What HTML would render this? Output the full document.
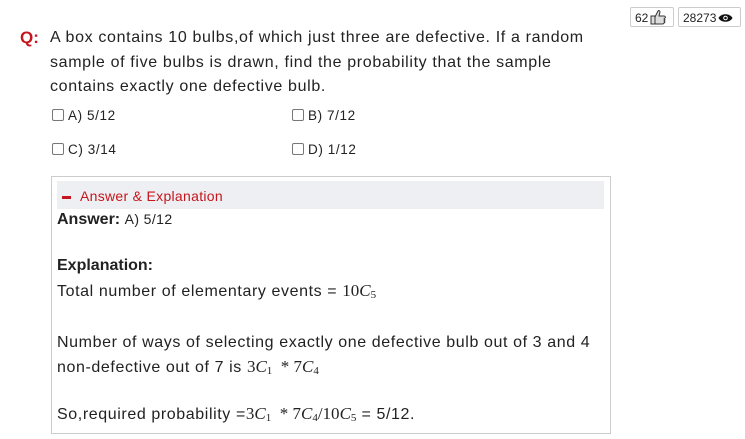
<!DOCTYPE html>
<html><head><meta charset="utf-8"><style>
body{margin:0;width:745px;height:439px;background:#fff;font-family:"Liberation Sans",sans-serif;color:#222;position:relative;overflow:hidden}
.a{position:absolute;white-space:nowrap}
.badge{position:absolute;top:7px;height:20px;border:1px solid #ccc;border-radius:2px;font-size:12px;line-height:20px;padding:0 4px;box-sizing:border-box}
.q{font-size:16px;line-height:24.5px;letter-spacing:0.65px}
.t{letter-spacing:0.6px}
.opt{font-size:13.5px;letter-spacing:0.6px}
.cb{display:inline-block;width:10px;height:10px;border:1px solid #777;border-radius:2px;vertical-align:-1px;margin-right:4px}
.m{font-family:"Liberation Serif",serif;font-size:17px;letter-spacing:0}
.m i{font-style:italic}
sub{font-size:11px;vertical-align:-2px}
</style></head><body>
<div class="badge" style="left:630px;width:44px">62<svg width="18" height="16" viewBox="0 0 18 16" style="vertical-align:-3px;margin-left:1px"><path d="M2 7h4v8H2z M6 8l3-6c1-1 2 0 2 1l-1 4h5c1 0 2 1 1 2l-1 1 1 1-1 1 1 1-1 1c0 1-1 1-2 1H6z" fill="#ddd" stroke="#333" stroke-width="1"/></svg></div>
<div class="badge" style="left:678px;width:63px">28273<svg width="15" height="10" viewBox="0 0 15 10" style="vertical-align:-1px;margin-left:2px"><path d="M0.5 5C3 0 12 0 14.5 5 12 10 3 10 0.5 5z" fill="#111"/><circle cx="7.5" cy="5" r="2.3" fill="#fff"/><circle cx="7.5" cy="5" r="1.3" fill="#111"/></svg></div>
<div class="a q" style="left:20px;top:26px;color:#c4161c;font-weight:bold;font-size:17px;letter-spacing:0">Q:</div>
<div class="a q" style="left:50px;top:26px">A box contains 10 bulbs,of which just three are defective. If a random<br>sample of five bulbs is drawn, find the probability that the sample<br>contains exactly one defective bulb.</div>
<div class="a opt" style="left:52px;top:108px"><span class="cb"></span>A) 5/12</div>
<div class="a opt" style="left:292px;top:108px"><span class="cb"></span>B) 7/12</div>
<div class="a opt" style="left:52px;top:142px"><span class="cb"></span>C) 3/14</div>
<div class="a opt" style="left:292px;top:142px"><span class="cb"></span>D) 1/12</div>
<div class="a" style="left:51px;top:176px;width:558px;height:256px;border:1px solid #ccc"></div>
<div class="a" style="left:57px;top:181px;width:547px;height:28px;background:#eeeff2"></div>
<div class="a" style="left:62px;top:196px;width:9px;height:3px;background:#c4161c"></div>
<div class="a t" style="left:80px;top:188px;font-size:14px;color:#c4161c;letter-spacing:0.3px">Answer &amp; Explanation</div>
<div class="a" style="left:57px;top:211px;font-size:16px"><b>Answer:</b> <span style="font-size:14px;letter-spacing:0.4px">A) 5/12</span></div>
<div class="a" style="left:57px;top:257px;font-size:16px;font-weight:bold">Explanation:</div>
<div class="a t" style="left:57px;top:281px;font-size:16px">Total number of elementary events = <span class="m">10<i>C</i><sub>5</sub></span></div>
<div class="a t" style="left:57px;top:331px;font-size:16px;line-height:24px">Number of ways of selecting exactly one defective bulb out of 3 and 4<br>non-defective out of 7 is <span class="m">3<i>C</i><sub>1</sub> &nbsp;* 7<i>C</i><sub>4</sub></span></div>
<div class="a t" style="left:57px;top:404px;font-size:16px">So,required probability =<span class="m">3<i>C</i><sub>1</sub> &nbsp;* 7<i>C</i><sub>4</sub>/10<i>C</i><sub>5</sub></span> = 5/12.</div>
</body></html>
